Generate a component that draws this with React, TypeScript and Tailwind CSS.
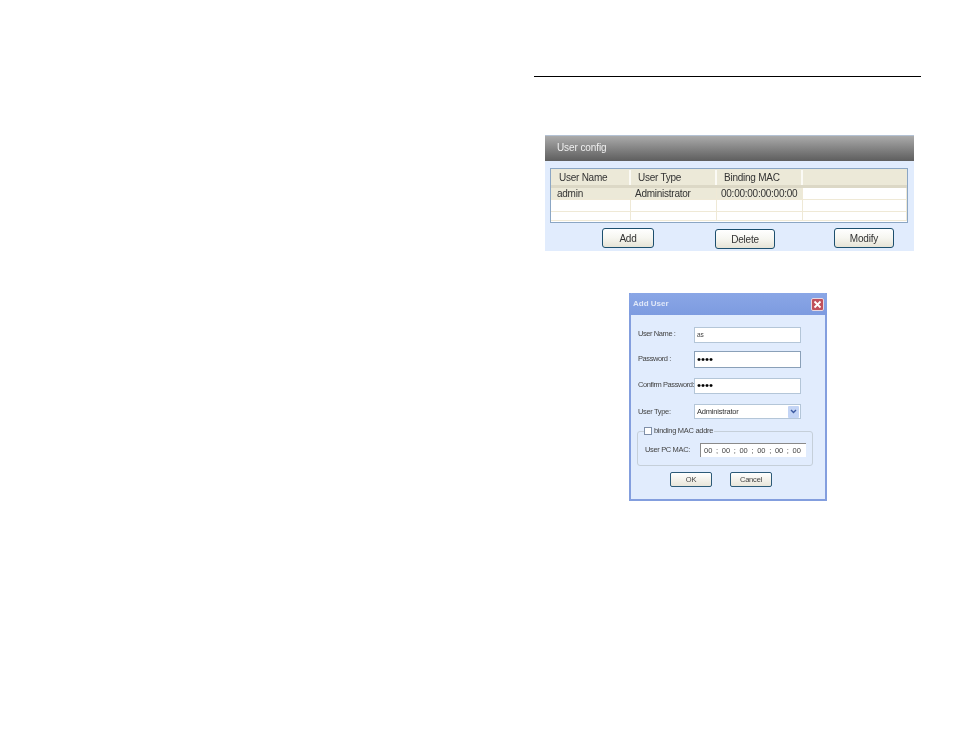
import React from "react";

const font = { fontFamily: '"Liberation Sans", Arial, sans-serif' };

function PanelButton({ label, w, h, className = "" }: { label: string; w: string; h: string; className?: string }) {
  return (
    <div className={`${w} ${h} ${className} flex items-center justify-center rounded-[3px] border border-[#1c4f6e] bg-gradient-to-b from-white via-[#f6f6f0] to-[#e6e3d6] pt-[1px] text-[10px] tracking-[-0.2px] text-[#333]`}>
      {label}
    </div>
  );
}

function DialogButton({ label }: { label: string }) {
  return (
    <div className="flex h-[15px] w-[42px] items-center justify-center rounded-[2px] border border-[#2c5a78] bg-gradient-to-b from-white to-[#e9e6da] text-[7.5px] tracking-[-0.2px] text-[#444]">
      {label}
    </div>
  );
}

function Row({ cells, shaded, h }: { cells: string[]; shaded?: boolean; h: string }) {
  const widths = ["w-[80px]", "w-[86px]", "w-[86px]", "flex-1"];
  const pads = ["pl-[6px]", "pl-[4px]", "pl-[4px]", ""];
  return (
    <div className={`flex ${h} border-b border-[#efe9d6] text-[10px] leading-none tracking-[-0.25px] text-[#333]`}>
      {widths.map((w, i) => (
        <div
          key={i}
          className={`${w} ${pads[i]} flex items-center whitespace-nowrap border-r border-[#efe9d6] ${shaded && i < 3 ? "bg-[#ece9d8]" : "bg-white"}`}
        >
          {cells[i]}
        </div>
      ))}
    </div>
  );
}

function Field({ label, value, h, mt, active, dots }: { label: string; value: string; h: string; mt: string; active?: boolean; dots?: boolean }) {
  return (
    <div className={`flex items-center ${mt}`}>
      <div className="w-[56px] whitespace-nowrap pb-[2px] text-[7.5px] tracking-[-0.42px] text-[#444]">{label}</div>
      <div className={`${h} flex w-[107px] items-center bg-white pl-[2px] border ${active ? "border-[#8aa0b8]" : "border-[#b4c6d8]"} ${dots ? "text-[11.5px] text-black" : "text-[6.5px] text-[#444]"}`}>
        {value}
      </div>
    </div>
  );
}

export default function App() {
  return (
    <div className="h-[737px] w-[954px] bg-white pl-[534px] pt-[76px]" style={font}>
      <div className="w-[387px]">
        <div className="h-[1px] bg-black" />

        <div className="ml-[11px] mt-[58px] w-[369px] blur-[0.3px]">
          <div className="flex h-[26px] items-center border-t border-[#b4c2d4] bg-gradient-to-b from-[#ababab] to-[#5e5e5e] pl-[12px] pb-[2px] text-[10px] tracking-[-0.1px] text-[#f0f0f0]">
            User config
          </div>
          <div className="h-[90px] bg-[#e1ecfd] pl-[5px] pr-[6px] pt-[7px]">
            <div className="h-[55px] border border-[#8ba6c4] bg-white">
              <div className="flex h-[19px] border-b-[3px] border-[#dcd8c6] bg-[#ece9d8] pt-[1px] text-[10px] leading-none tracking-[-0.25px] text-[#333]">
                <div className="flex w-[80px] items-center border-r-2 border-[#fbfaf5] pl-[8px]">User Name</div>
                <div className="flex w-[86px] items-center border-r-2 border-[#fbfaf5] pl-[7px]">User Type</div>
                <div className="flex w-[86px] items-center border-r-2 border-[#fbfaf5] pl-[7px]">Binding MAC</div>
              </div>
              <Row h="h-[12px]" shaded cells={["admin", "Administrator", "00:00:00:00:00:00", ""]} />
              <Row h="h-[12px]" cells={["", "", "", ""]} />
              <Row h="h-[9px]" cells={["", "", "", ""]} />
            </div>
            <div className="mt-[5px] flex items-start">
              <PanelButton label="Add" w="w-[52px]" h="h-[20px]" className="ml-[52px]" />
              <PanelButton label="Delete" w="w-[60px]" h="h-[20px]" className="ml-[61px] mt-[1px]" />
              <PanelButton label="Modify" w="w-[60px]" h="h-[20px]" className="ml-[59px]" />
            </div>
          </div>
        </div>

        <div className="ml-[95px] mt-[42px] h-[208px] w-[198px] border-[2px] border-t-0 border-[#839ede] bg-[#e1ecfd] blur-[0.4px]">
          <div className="-mx-[2px] flex h-[22px] items-center justify-between rounded-t-[3px] bg-gradient-to-b from-[#8aa6e6] to-[#7d9be0] pl-[4px] pr-[3px] text-[8px] font-bold text-[#dfe7f8]">
            Add User
            <div className="flex h-[13px] w-[13px] items-center justify-center rounded-[2px] border border-[#e8d8e0] bg-[#c0505c]">
              <svg width="9" height="9" viewBox="0 0 9 9">
                <path d="M1.5 1.5 L7.5 7.5 M7.5 1.5 L1.5 7.5" stroke="white" strokeWidth="1.8" />
              </svg>
            </div>
          </div>
          <div className="pl-[7px]">
            <Field label="User Name :" value="as" h="h-[16px]" mt="mt-[12px]" />
            <Field label="Password :" value="••••" h="h-[17px]" mt="mt-[8px]" active dots />
            <Field label="Confirm Password:" value="••••" h="h-[16px]" mt="mt-[10px]" dots />
            <div className="mt-[10px] flex items-center">
              <div className="w-[56px] text-[7.5px] tracking-[-0.35px] text-[#444]">User Type:</div>
              <div className="flex h-[15px] w-[107px] items-center justify-between border border-[#b4c6d8] bg-white pl-[2px] pr-[1px] text-[7.5px] tracking-[-0.2px] text-[#333]">
                Administrator
                <div className="flex h-[12px] w-[11px] items-center justify-center rounded-[1px] bg-[#c3d4f5]">
                  <svg width="7" height="5" viewBox="0 0 7 5">
                    <path d="M1 1 L3.5 3.5 L6 1" fill="none" stroke="#3c5aa0" strokeWidth="1.4" />
                  </svg>
                </div>
              </div>
            </div>
            <div className="relative -ml-[1px] mt-[12px] h-[35px] w-[176px] rounded-[3px] border border-[#c5cfd9]">
              <div className="absolute -top-[5px] left-[6px] flex items-center gap-[2px] bg-[#e1ecfd] pr-[1px] text-[7.5px] leading-none tracking-[-0.3px] text-[#444]">
                <div className="h-[8px] w-[8px] border border-[#7f8fa8] bg-white" />
                binding MAC addre
              </div>
              <div className="flex items-center pl-[7px] pt-[11px]">
                <div className="w-[55px] text-[7.5px] tracking-[-0.35px] text-[#444]">User PC MAC:</div>
                <div className="flex h-[14px] w-[106px] items-center justify-between border-t border-l border-[#8a8a8a] bg-white pl-[3px] pr-[5px] text-[7.5px] text-[#444]">
                  <span>00</span><span>;</span><span>00</span><span>;</span><span>00</span><span>;</span><span>00</span><span>;</span><span>00</span><span>;</span><span>00</span>
                </div>
              </div>
            </div>
            <div className="ml-[32px] mt-[6px] flex gap-[18px]">
              <DialogButton label="OK" />
              <DialogButton label="Cancel" />
            </div>
          </div>
        </div>
      </div>
    </div>
  );
}
